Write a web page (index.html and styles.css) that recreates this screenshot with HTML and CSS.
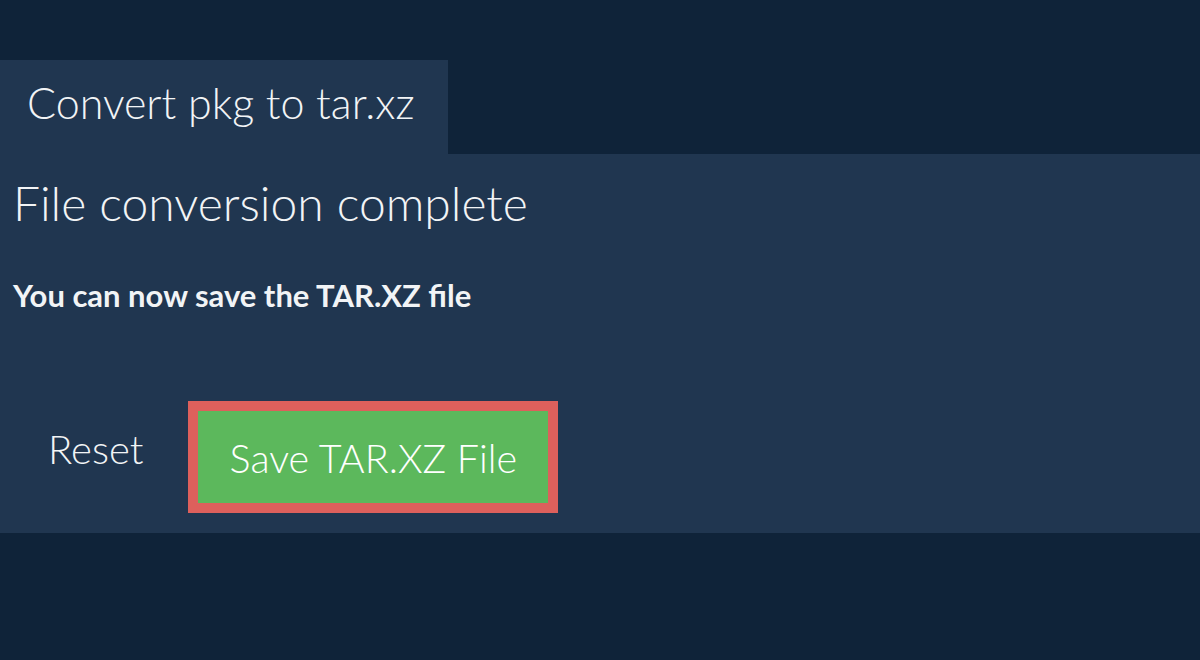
FILE: index.html
```html
<!DOCTYPE html>
<html>
<head>
<meta charset="utf-8">
<link rel="stylesheet" href="styles.css">
</head>
<body>
<div class="page">
  <div class="tabs">
    <div class="tab">Convert pkg to tar.xz</div>
  </div>
  <div class="panel">
    <h1 class="title">File conversion complete</h1>
    <p class="note">You can now save the TAR.XZ file</p>
    <div class="actions">
      <button class="reset">Reset</button>
      <button class="save">Save TAR.XZ File</button>
    </div>
  </div>
</div>
</body>
</html>
```
FILE: styles.css
```css
html, body {
  margin: 0;
  padding: 0;
  background: #0f2339;
  font-family: Lato, "Open Sans", sans-serif;
  color: #f2f4f6;
}
.page {
  padding-top: 60px;
}
.tabs {
  display: flex;
}
.tab {
  width: 448px;
  height: 94px;
  box-sizing: border-box;
  background: #203650;
  padding-left: 27px;
  padding-bottom: 10px;
  display: flex;
  align-items: center;
  font-size: 43px;
  font-weight: 300;
}
.panel {
  background: #203650;
  height: 379px;
  box-sizing: border-box;
  padding: 19px 13px 0;
  display: flex;
  flex-direction: column;
}
.title {
  margin: 0;
  font-size: 48px;
  font-weight: 300;
  line-height: 60px;
}
.note {
  margin: 44px 0 0;
  font-size: 31px;
  font-weight: 700;
  line-height: 36px;
}
.actions {
  display: flex;
  align-items: center;
  gap: 10px;
  margin-top: 88px;
}
.reset {
  background: none;
  border: none;
  color: #f2f4f6;
  font-family: inherit;
  font-size: 40px;
  font-weight: 300;
  padding: 0 35px;
  margin-bottom: 16px;
  cursor: pointer;
}
.save {
  background: #5cb85c;
  border: 10px solid #dd605c;
  color: #fff;
  font-family: inherit;
  font-size: 39.5px;
  font-weight: 300;
  width: 370px;
  height: 112px;
  box-sizing: border-box;
  padding: 0;
  cursor: pointer;
}
```
